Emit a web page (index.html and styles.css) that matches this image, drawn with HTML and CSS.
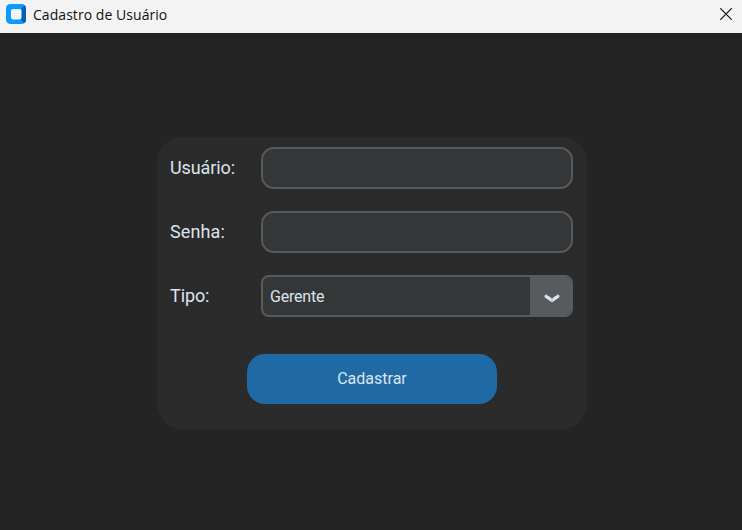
FILE: index.html
```html
<!DOCTYPE html>
<html lang="pt-BR">
<head>
<meta charset="utf-8">
<title>Cadastro de Usuário</title>
<link rel="stylesheet" href="styles.css">
</head>
<body>
<header class="titlebar">
  <svg class="app-icon" width="20" height="20" viewBox="0 0 20 20">
    <rect width="20" height="20" rx="4.5" fill="#0a9bff"/>
    <path d="M15.500 4.500 18.500 1.300Q20 2.400 20 4.500v11q0 2.500-1.300 3.500L16.500 17.500 15 16Z" fill="#0560b4"/>
    <rect x="5" y="5" width="10.500" height="10.500" rx="2" fill="#f3f3f3"/>
  </svg>
  <span class="title">Cadastro de Usuário</span>
  <button class="close" aria-label="Fechar">
    <svg width="12" height="12" viewBox="0 0 12 12"><path d="M.3.3 11.700 11.700M11.700.3.3 11.700" stroke="#111" stroke-width="1.200"/></svg>
  </button>
</header>
<main>
  <form class="card">
    <div class="row"><label class="label" for="user">Usuário:</label><input class="field" id="user" type="text"></div>
    <div class="row"><label class="label wide" for="pass">Senha:</label><input class="field" id="pass" type="password"></div>
    <div class="row">
      <span class="label">Tipo:</span>
      <div class="combo">
        <span class="value">Gerente</span>
        <span class="arrow"><svg width="16" height="9" viewBox="0 0 16 9"><path d="M2.300 2.300 8 6.500 13.700 2.300" fill="none" stroke="#dce4ee" stroke-width="3.400" stroke-linecap="round" stroke-linejoin="round"/><path d="M8 4.500v1.500M7.500 8h1M3 1.500h1M12 1.500h1" stroke="#7e8790" stroke-width=".8"/></svg></span>
      </div>
    </div>
    <button class="submit" type="button">Cadastrar</button>
  </form>
</main>
</body>
</html>
```
FILE: styles.css
```css
* { box-sizing: border-box; }
body {
  margin: 0;
  height: 530px;
  display: flex;
  flex-direction: column;
  overflow: hidden;
  background: #242424;
  color: #dce4ee;
  font-family: Roboto, sans-serif;
}
.titlebar {
  height: 33px;
  flex: none;
  display: flex;
  align-items: flex-start;
  padding: 4px 10px 0 6px;
  background: #f3f3f3;
}
.app-icon { display: block; }
.title {
  margin-left: 7px;
  color: #111;
  font: 14px/21px "Open Sans", sans-serif;
  letter-spacing: 0.05px;
}
.close {
  margin: 4px 0 0 auto;
  padding: 0;
  border: 0;
  background: none;
}
.close svg { display: block; }
main {
  flex: 1;
  display: flex;
  justify-content: center;
  align-items: flex-start;
  padding: 104px 0 0 2px;
}
.card {
  width: 430px;
  height: 292px;
  padding: 10px 14px 0 13px;
  display: flex;
  flex-direction: column;
  gap: 22px;
  border-radius: 25px;
  background: #2b2b2b;
}
.row {
  display: grid;
  grid-template-columns: 91px 312px;
  height: 42px;
  align-items: center;
  font-size: 18px;
}
.label {
  padding-bottom: 2px;
  letter-spacing: -0.1px;
}
.wide { letter-spacing: 0.1px; }
.field, .combo {
  width: 312px;
  height: 42px;
  border: 2px solid #565b5e;
  background: #343638;
  color: #dce4ee;
}
.field {
  border-radius: 13px;
  padding: 0 12px;
  font: 16px Roboto, sans-serif;
  outline: none;
}
.combo {
  display: flex;
  border-radius: 8px;
  overflow: hidden;
  font-size: 16px;
}
.value {
  flex: 1;
  padding-left: 7px;
  line-height: 39px;
  letter-spacing: -0.2px;
}
.arrow {
  width: 41px;
  padding: 17px 0 0 14px;
  background: #565b5e;
}
.arrow svg { display: block; }
.submit {
  width: 250px;
  height: 50px;
  margin: 15px 0 0 77px;
  padding: 0 0 2px;
  border: 0;
  border-radius: 18px;
  background: #1f6aa5;
  color: #dce4ee;
  font: 16px Roboto, sans-serif;
}
```
